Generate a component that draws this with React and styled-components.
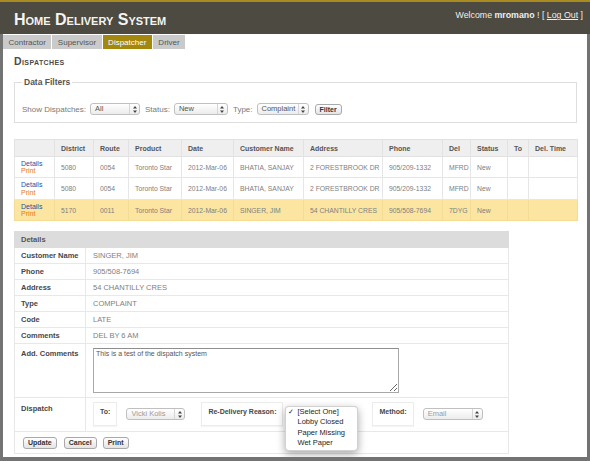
import React from 'react';
import styled, {createGlobalStyle} from 'styled-components';

const GlobalStyle = createGlobalStyle`
  html, body {
    margin: 0;
    padding: 0;
    background: #fff;
  }
  body {
    font-family: "Liberation Sans", Arial, sans-serif;
  }
`;

const Page = styled.div`
  width: 590px;
  height: 461px;
  display: flex;
  flex-direction: column;
  overflow: hidden;
`;

const Header = styled.header`
  height: 32px;
  border-top: 2px solid #a98b1f;
  background: #4c4a41;
  display: flex;
  justify-content: space-between;
  align-items: flex-start;
  padding: 0 7px 0 14px;
  flex-shrink: 0;
`;

const Title = styled.h1`
  margin: 0;
  padding-top: 8.5px;
  color: #f4f4f2;
  font-size: 16px;
  line-height: 18px;
  font-weight: bold;
  font-variant: small-caps;
`;

const Welcome = styled.div`
  padding-top: 8px;
  font-size: 8.8px;
  line-height: 10px;
  color: #efefef;

  & b {
    font-weight: bold;
  }

  & a {
    color: #efefef;
    text-decoration: underline;
  }
`;

const Frame = styled.div`
  flex: 1;
  min-height: 0;
  border: 3px solid #737373;
  border-top: 0;
  border-bottom-width: 4px;
  padding-top: 1px;
  overflow: hidden;
`;

const TabBar = styled.nav`
  display: flex;
  gap: 1px;
  height: 14px;
`;

const Tab = styled.span`
  display: flex;
  align-items: center;
  padding: 0 5.5px;
  font-size: 8px;
  color: ${p => p.$active ? '#fff' : '#555'};
  background: ${p => p.$active ? '#a4870d' : '#cacaca'};
`;

const Content = styled.main`
  padding: 0 10px 0 11px;
`;

const SectionTitle = styled.h2`
  margin: 6px 0 0;
  font-size: 10.5px;
  line-height: 12px;
  font-weight: bold;
  font-variant: small-caps;
  letter-spacing: 0.4px;
  color: #4a4a4a;
`;

const Filters = styled.fieldset`
  margin: 10px 0 0;
  padding: 15px 7px 7px;
  border: 1px solid #dedede;
`;

const Legend = styled.legend`
  padding: 0 2px;
  font-size: 8.5px;
  line-height: 11px;
  font-weight: bold;
  color: #555;
`;

const FilterRow = styled.div`
  display: flex;
  align-items: center;
  font-size: 8px;
  color: #7a7a7a;
`;

const FilterLabel = styled.span`
  margin: 0 4px 0 ${p => p.$first ? 0 : 5}px;
`;

const SelectBox = styled.span`
  position: relative;
  display: inline-flex;
  align-items: stretch;
  box-sizing: border-box;
  width: ${p => p.$w}px;
  height: 12px;
  margin-top: ${p => p.$top || 0}px;
  border: 1px solid #c0c0c0;
  border-radius: 3px;
  background: linear-gradient(#ffffff, #ececec);
  font-size: 7.5px;
  color: ${p => p.$muted ? '#9c9c9c' : '#555'};
  flex-shrink: 0;
`;

const SelectText = styled.span`
  flex: 1;
  padding-left: 4px;
  line-height: 10px;
  white-space: nowrap;
  overflow: hidden;
`;

const SelectArrow = styled.span`
  width: 9px;
  border-left: 1px solid #d6d6d6;
  display: flex;
  align-items: center;
  justify-content: center;
`;

const Button = styled.button`
  font-family: inherit;
  font-size: 7px;
  font-weight: bold;
  color: #333;
  height: ${p => p.$h || 12}px;
  padding: 0 4px;
  margin-left: ${p => p.$gap || 0}px;
  border: 1px solid #a9a9a9;
  border-radius: 3px;
  background: linear-gradient(#ffffff, #e4e4e4);
  line-height: 10px;
  vertical-align: top;
`;

const Grid = styled.table`
  width: 563px;
  margin-top: 16px;
  border-collapse: collapse;
  table-layout: fixed;
  font-size: 7px;
  border: 1px solid #e2e2e2;
`;

const HeadCell = styled.th`
  height: 16px;
  padding: 0 6px;
  background: #efefef;
  border: 1px solid #e2e2e2;
  text-align: left;
  font-weight: bold;
  color: #555;
  white-space: nowrap;
`;

const Row = styled.tr`
  background: ${p => p.$selected ? '#fbe5a0' : '#fff'};
`;

const Cell = styled.td`
  height: ${p => p.$h || 20}px;
  padding: 0 5px 0 6px;
  border: 1px solid ${p => p.$selected ? '#f3dc94' : '#e6e6e6'};
  color: #808080;
  font-size: 6.8px;
  white-space: nowrap;
  overflow: hidden;
`;

const LinkStack = styled.div`
  display: flex;
  flex-direction: column;
  font-size: 7px;
  line-height: 7.5px;

  & a {
    text-decoration: none;
  }
`;

const DetailsLink = styled.a`
  color: #2b4e9c;
`;

const PrintLink = styled.a`
  color: #e37c0a;
`;

const DetailTable = styled.table`
  width: 495px;
  margin-top: 10px;
  border-collapse: collapse;
  table-layout: fixed;
  font-size: 7.5px;
`;

const DetailHead = styled.th`
  height: 15px;
  padding: 0 6px;
  background: #dcdcdc;
  border: 1px solid #dcdcdc;
  text-align: left;
  font-weight: bold;
  color: #555;
`;

const Label = styled.td`
  height: ${p => p.$h || 15}px;
  padding: ${p => p.$top ? `${p.$top}px` : 0} 6px 0;
  vertical-align: ${p => p.$top ? 'top' : 'middle'};
  border: 1px solid #e8e8e8;
  font-weight: bold;
  color: #474747;
  line-height: 9px;
  white-space: nowrap;
`;

const Value = styled.td`
  padding: ${p => p.$pad || '0 7px'};
  border: 1px solid #e8e8e8;
  color: #808080;
  vertical-align: ${p => p.$top ? 'top' : 'middle'};
`;

const Comments = styled.textarea`
  display: block;
  box-sizing: border-box;
  width: 306px;
  height: 45px;
  margin: 0;
  padding: 1px 2px;
  border: 1px solid #a8a8a8;
  border-top-color: #8e8e8e;
  font-family: inherit;
  font-size: 7px;
  color: #555;
  resize: both;
`;

const DispatchLine = styled.div`
  display: flex;
  align-items: flex-start;
`;

const FieldGroup = styled.div`
  display: flex;
  align-items: flex-start;
  gap: 9px;
  margin-left: ${p => p.$gap || 0}px;
`;

const FieldBox = styled.div`
  box-sizing: border-box;
  height: 24px;
  padding: 4px 6px 0;
  border: 1px solid #ececec;
  box-shadow: 0 1px 1px rgba(0, 0, 0, 0.04);
  font-size: 7px;
  line-height: 9px;
  font-weight: bold;
  color: #474747;
  white-space: nowrap;
`;

const Popup = styled.ul`
  position: absolute;
  left: -8px;
  top: -3px;
  width: 71px;
  margin: 0;
  padding: 0 0 2px;
  list-style: none;
  background: #fff;
  border: 1px solid rgba(0, 0, 0, 0.18);
  border-radius: 4px;
  box-shadow: 0 3px 8px rgba(0, 0, 0, 0.35);
  z-index: 2;
`;

const PopupItem = styled.li`
  display: flex;
  font-size: 7.5px;
  line-height: 10.3px;
  color: #1e1e1e;
  white-space: nowrap;
`;

const CheckSlot = styled.span`
  width: 11px;
  padding-left: 2px;
  box-sizing: border-box;
  font-size: 7px;
`;

const ButtonRow = styled.td`
  height: 21px;
  padding: 0 8px;
  border: 1px solid #e8e8e8;
`;

const Arrows = () => (
  <svg width="4" height="7" viewBox="0 0 4 7">
    <path d="M2 0 L4 2.6 H0 Z M2 7 L0 4.4 H4 Z" fill="#444"/>
  </svg>
);

const Select = ({w, value, muted, top, children}) => (
  <SelectBox $w={w} $muted={muted} $top={top}>
    <SelectText>{value}</SelectText>
    <SelectArrow><Arrows/></SelectArrow>
    {children}
  </SelectBox>
);

const columns = [
  ['', 40], ['District', 39], ['Route', 35], ['Product', 53], ['Date', 52],
  ['Customer Name', 70], ['Address', 79], ['Phone', 60], ['Del', 28],
  ['Status', 37], ['To', 21], ['Del. Time', 49],
];

const dispatches = [
  {district: '5080', route: '0054', product: 'Toronto Star', date: '2012-Mar-06', name: 'BHATIA, SANJAY', address: '2 FORESTBROOK DR', phone: '905/209-1332', del: 'MFRD', status: 'New', h: 20},
  {district: '5080', route: '0054', product: 'Toronto Star', date: '2012-Mar-06', name: 'BHATIA, SANJAY', address: '2 FORESTBROOK DR', phone: '905/209-1332', del: 'MFRD', status: 'New', h: 21},
  {district: '5170', route: '0011', product: 'Toronto Star', date: '2012-Mar-06', name: 'SINGER, JIM', address: '54 CHANTILLY CRES', phone: '905/508-7694', del: '7DYG', status: 'New', h: 20, selected: true},
];

const details = [
  ['Customer Name', 'SINGER, JIM'],
  ['Phone', '905/508-7694'],
  ['Address', '54 CHANTILLY CRES'],
  ['Type', 'COMPLAINT'],
  ['Code', 'LATE'],
  ['Comments', 'DEL BY 6 AM'],
];

const reasons = ['[Select One]', 'Lobby Closed', 'Paper Missing', 'Wet Paper'];

export default function App() {
  return (
    <Page>
      <GlobalStyle/>
      <Header>
        <Title>Home Delivery System</Title>
        <Welcome>
          Welcome <b>mromano</b> ! [ <a href="#logout">Log Out</a> ]
        </Welcome>
      </Header>

      <Frame>
        <TabBar>
          <Tab>Contractor</Tab>
          <Tab>Supervisor</Tab>
          <Tab $active>Dispatcher</Tab>
          <Tab>Driver</Tab>
        </TabBar>

        <Content>
          <SectionTitle>Dispatches</SectionTitle>

          <Filters>
            <Legend>Data Filters</Legend>
            <FilterRow>
              <FilterLabel $first>Show Dispatches:</FilterLabel>
              <Select w={50} value="All"/>
              <FilterLabel>Status:</FilterLabel>
              <Select w={54} value="New"/>
              <FilterLabel>Type:</FilterLabel>
              <Select w={52} value="Complaint"/>
              <Button $h={11} $gap={6}>Filter</Button>
            </FilterRow>
          </Filters>

          <Grid>
            <colgroup>
              {columns.map(([name, width]) => <col key={name || 'links'} style={{width}}/>)}
            </colgroup>
            <thead>
              <tr>
                {columns.map(([name]) => <HeadCell key={name || 'links'}>{name}</HeadCell>)}
              </tr>
            </thead>
            <tbody>
              {dispatches.map((d, i) => (
                <Row key={i} $selected={d.selected}>
                  <Cell $h={d.h} $selected={d.selected}>
                    <LinkStack>
                      <DetailsLink href="#details">Details</DetailsLink>
                      <PrintLink href="#print">Print</PrintLink>
                    </LinkStack>
                  </Cell>
                  <Cell $selected={d.selected}>{d.district}</Cell>
                  <Cell $selected={d.selected}>{d.route}</Cell>
                  <Cell $selected={d.selected}>{d.product}</Cell>
                  <Cell $selected={d.selected}>{d.date}</Cell>
                  <Cell $selected={d.selected}>{d.name}</Cell>
                  <Cell $selected={d.selected}>{d.address}</Cell>
                  <Cell $selected={d.selected}>{d.phone}</Cell>
                  <Cell $selected={d.selected}>{d.del}</Cell>
                  <Cell $selected={d.selected}>{d.status}</Cell>
                  <Cell $selected={d.selected}></Cell>
                  <Cell $selected={d.selected}></Cell>
                </Row>
              ))}
            </tbody>
          </Grid>

          <DetailTable>
            <colgroup>
              <col style={{width: 71}}/>
              <col/>
            </colgroup>
            <thead>
              <tr><DetailHead colSpan={2}>Details</DetailHead></tr>
            </thead>
            <tbody>
              {details.map(([label, value]) => (
                <tr key={label}>
                  <Label>{label}</Label>
                  <Value>{value}</Value>
                </tr>
              ))}
              <tr>
                <Label $h={48} $top={5}>Add. Comments</Label>
                <Value $top $pad="4px 7px 4px">
                  <Comments defaultValue="This is a test of the dispatch system"/>
                </Value>
              </tr>
              <tr>
                <Label $h={27} $top={6}>Dispatch</Label>
                <Value $top $pad="4px 7px 4px">
                  <DispatchLine>
                    <FieldGroup>
                      <FieldBox>To:</FieldBox>
                      <Select w={59} value="Vicki Kolis" muted top={6}/>
                    </FieldGroup>
                    <FieldGroup $gap={16}>
                      <FieldBox>Re-Delivery Reason:</FieldBox>
                      <Select w={65} value="" top={6}>
                        <Popup>
                          {reasons.map((r, i) => (
                            <PopupItem key={r}>
                              <CheckSlot>{i === 0 ? '✓' : ''}</CheckSlot>
                              {r}
                            </PopupItem>
                          ))}
                        </Popup>
                      </Select>
                    </FieldGroup>
                    <FieldGroup $gap={15}>
                      <FieldBox>Method:</FieldBox>
                      <Select w={60} value="Email" muted top={6}/>
                    </FieldGroup>
                  </DispatchLine>
                </Value>
              </tr>
              <tr>
                <ButtonRow colSpan={2}>
                  <Button>Update</Button>
                  <Button $gap={7}>Cancel</Button>
                  <Button $gap={6}>Print</Button>
                </ButtonRow>
              </tr>
            </tbody>
          </DetailTable>
        </Content>
      </Frame>
    </Page>
  );
}
